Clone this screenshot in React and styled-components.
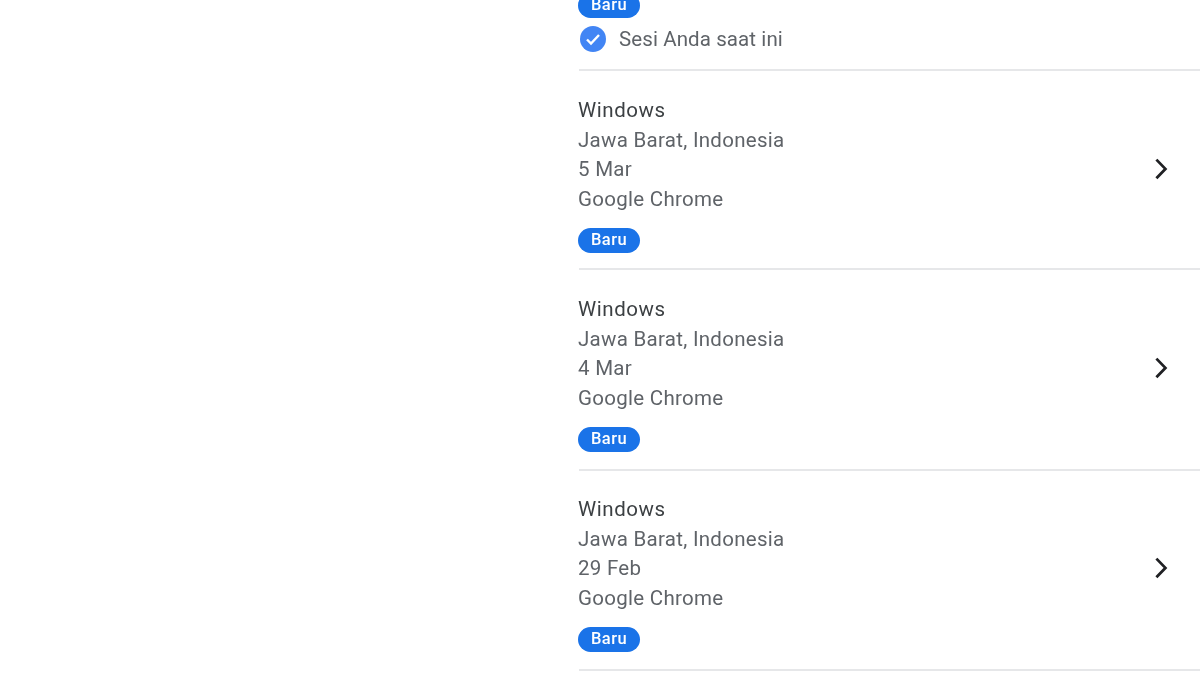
import React from "react";
import styled, { createGlobalStyle } from "styled-components";

const Global = createGlobalStyle`
  html, body { margin: 0; padding: 0; background: #fff; height: 675px; overflow: hidden; }
  #root { height: 675px; overflow: hidden; }
`;

const Page = styled.main`
  height: 675px;
  overflow: hidden;
  padding-left: 578px;
  font-family: Roboto, "Liberation Sans", sans-serif;
  filter: blur(0.55px);
`;

const List = styled.div`
  margin-top: -7px;
`;

const TopRow = styled.div`
  display: flex;
  flex-direction: column;
  box-sizing: border-box;
  height: 78px;
  border-bottom: 2px solid #e6e7e9;
  margin-left: 1px;
`;

const Row = styled.div`
  display: flex;
  align-items: flex-start;
  justify-content: space-between;
  box-sizing: border-box;
  height: ${(p) => p.$h}px;
  padding: ${(p) => p.$pad}px 27px 0 0;
  border-bottom: 2px solid #e6e7e9;
  margin-left: 1px;
`;

const Info = styled.div`
  display: flex;
  flex-direction: column;
  margin-left: -1px;
`;

const Title = styled.div`
  font-size: 20.5px;
  letter-spacing: 0.55px;
  line-height: 29.6px;
  color: #3c4043;
`;

const Line = styled.div`
  font-size: 20.5px;
  letter-spacing: 0.28px;
  line-height: 29.6px;
  color: #5f6368;
`;

const Badge = styled.span`
  align-self: flex-start;
  flex: none;
  display: flex;
  align-items: center;
  justify-content: center;
  width: 62px;
  height: 25px;
  margin-top: ${(p) => p.$top}px;
  margin-left: ${(p) => p.$left}px;
  border-radius: 13px;
  background: #1a73e8;
  color: #fff;
  font-size: 16.5px;
  font-weight: 500;
  letter-spacing: 0.4px;
  line-height: 21px;
  padding-bottom: 3px;
  box-sizing: border-box;
`;

const Current = styled.div`
  display: flex;
  align-items: center;
  gap: 12px;
  margin-top: 6px;
  height: 30px;
  font-size: 20.5px;
  letter-spacing: 0.1px;
  color: #5f6368;
`;

const Chevron = styled.svg`
  flex: none;
  margin-top: 60px;
`;

const Device = ({ date, h, pad }) => (
  <Row $h={h} $pad={pad}>
    <Info>
      <Title>Windows</Title>
      <Line>Jawa Barat, Indonesia</Line>
      <Line>{date}</Line>
      <Line>Google Chrome</Line>
      <Badge $top={14} $left={0}>Baru</Badge>
    </Info>
    <Chevron width="24" height="26" viewBox="0 0 24 26" fill="none">
      <path d="M7.4 3.6 16.4 12.9 7.4 22.2" stroke="#202124" strokeWidth="2.8" />
    </Chevron>
  </Row>
);

export default function App() {
  return (
    <>
      <Global />
      <Page>
        <List>
          <TopRow>
            <Badge $top={0} $left={-1}>Baru</Badge>
            <Current>
              <svg width="28" height="28" viewBox="0 0 28 28">
                <circle cx="14" cy="14" r="13" fill="#4285f4" />
                <path d="M8 14.5l4 4 8-8.5" fill="none" stroke="#fff" strokeWidth="2.4" />
              </svg>
              Sesi Anda saat ini
            </Current>
          </TopRow>
          <Device date="5 Mar" h={199} pad={25} />
          <Device date="4 Mar" h={201} pad={25} />
          <Device date="29 Feb" h={200} pad={24} />
        </List>
      </Page>
    </>
  );
}
